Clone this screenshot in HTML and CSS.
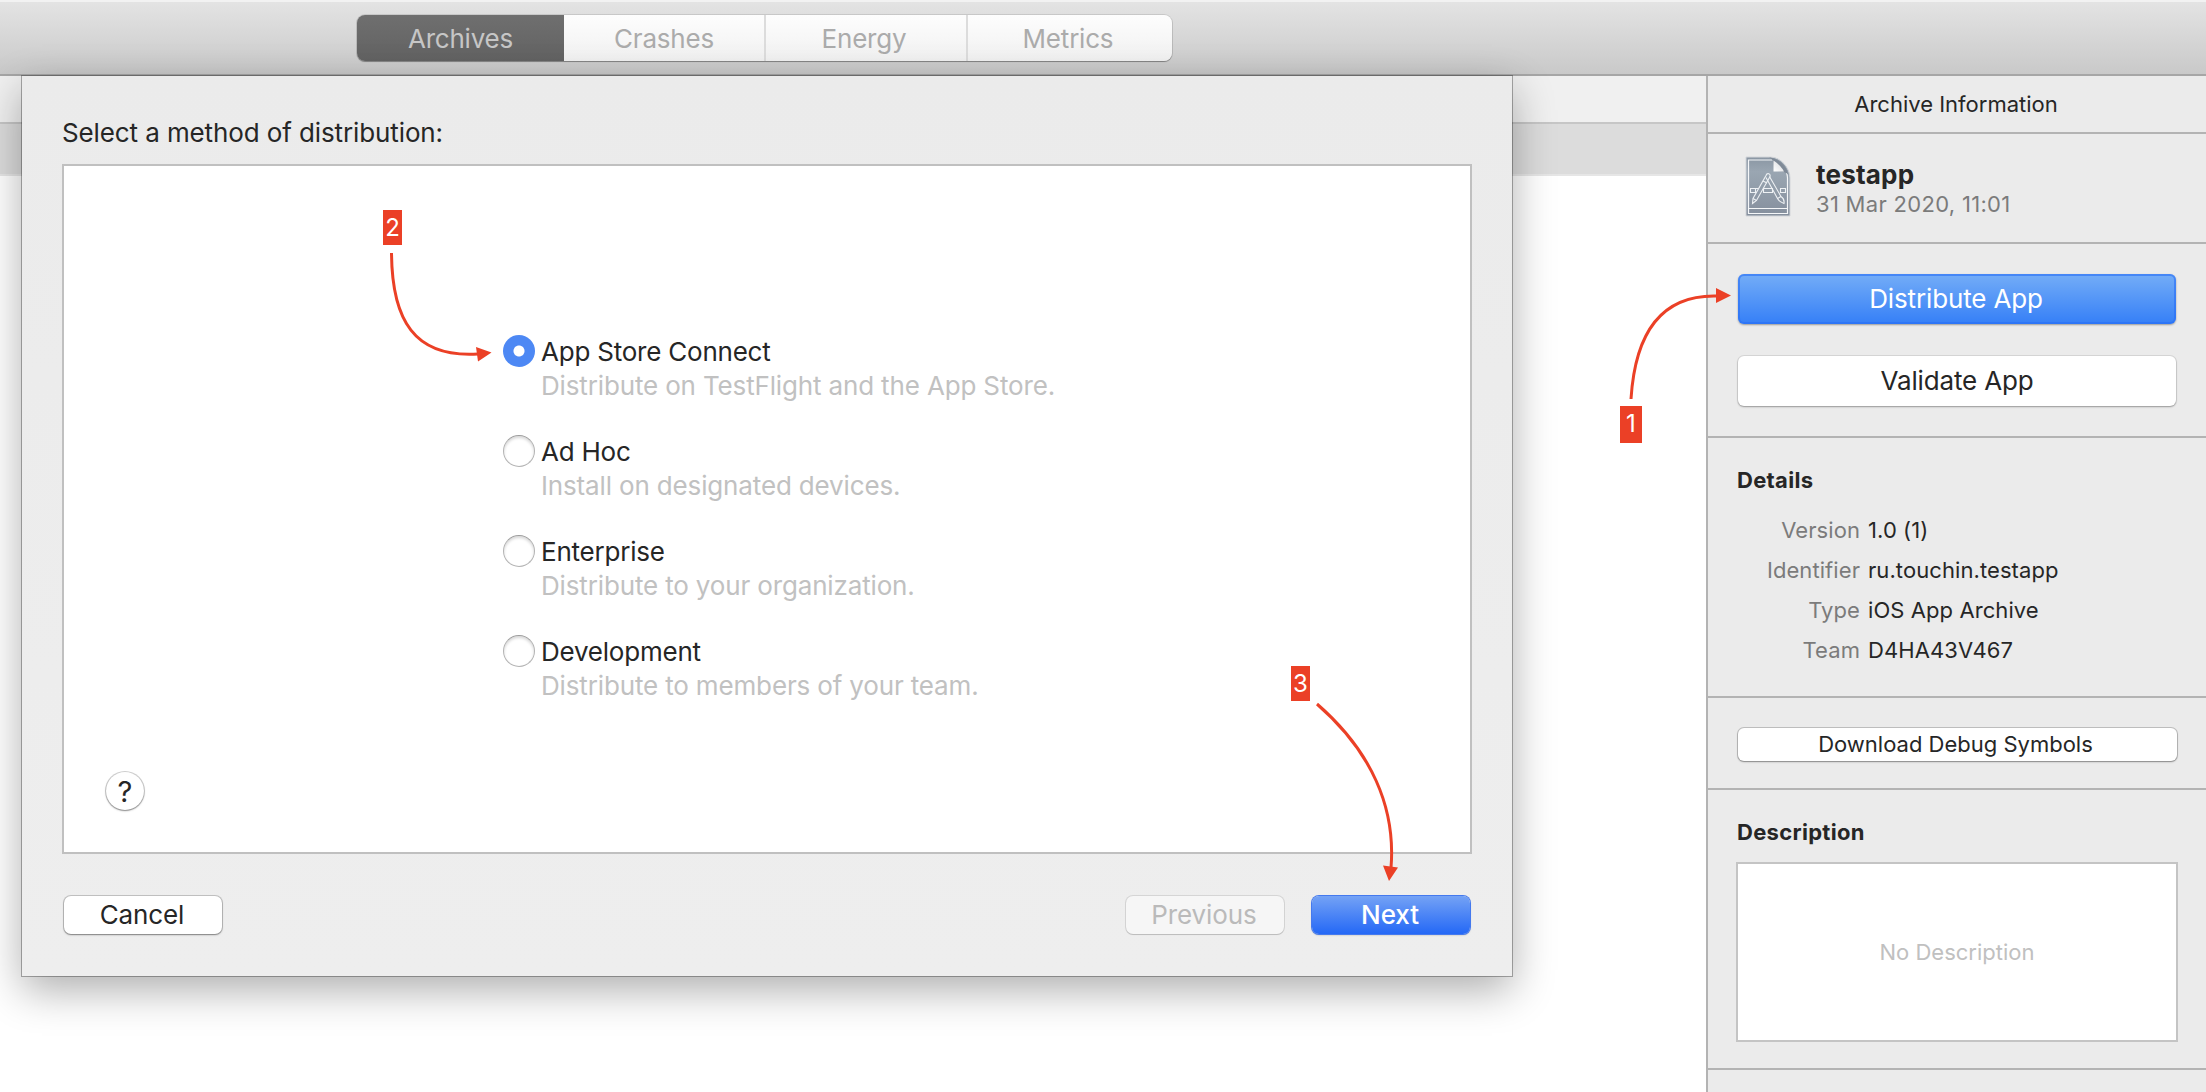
FILE: index.html
```html
<!DOCTYPE html>
<html lang="en">
<head>
<meta charset="utf-8">
<title>Archives</title>
<link rel="stylesheet" href="styles.css">
</head>
<body>
<div class="window">
  <header class="toolbar">
    <nav class="tabs">
      <button class="tab tab-active">Archives</button>
      <button class="tab">Crashes</button>
      <button class="tab">Energy</button>
      <button class="tab">Metrics</button>
    </nav>
  </header>
  <div class="content">
    <main class="archives">
      <div class="list-header"></div>
      <div class="list-row"></div>
    </main>
    <aside class="inspector">
      <h1 class="inspector-title">Archive Information</h1>
      <section class="archive">
        <svg class="archive-icon" width="48" height="62" viewBox="0 0 48 62">
          <defs>
            <linearGradient id="paper" x1="0" y1="0" x2="0" y2="1"><stop offset="0" stop-color="#8a96a3"/><stop offset=".25" stop-color="#9aa6b2"/><stop offset="1" stop-color="#858f9d"/></linearGradient>
            <linearGradient id="fold" x1="0" y1="1" x2="1" y2="0"><stop offset="0" stop-color="#fff"/><stop offset="1" stop-color="#d5d7da"/></linearGradient>
          </defs>
          <path d="M1 1h24C36 1 45 12 45 22v38H1z" fill="url(#paper)" stroke="#d3d6da" stroke-width="1"/>
          <path d="M29 4H3.500v53.500h39V22c0-2-.5-4-1-6M3.500 52.500h39" fill="none" stroke="#f4f6f8" stroke-width="1.200"/>
          <path d="M24 1.300C28 3 29 6 29 15c8 0 12 1 14.500 4C42 10 34 3 24 1.300z" fill="#7f8a97"/>
          <path d="M28.500 4.500v11H39c-2-4-6-8-10.500-11z" fill="url(#fold)"/>
          <g fill="none" stroke="#eef1f4" stroke-width="1.100">
            <path d="M5.500 32.500h5v4h-5zM18.500 32.500h9v4h-9zM35.500 32.500h5v4h-5zM10.500 32.500h3"/>
            <path d="M21 19.500c1-3 5-2 4 1L11.500 44.500 7.500 47.500 8 42.500z"/>
            <path d="M24.500 20.500 36 40.500M21 21.500 32.500 42.500M32.500 42.500l3.500-2c3 2 3.500 4 3 7-3-1-5-2-6.500-5zM18 25l4 2M8 42.500l3.500 2"/>
          </g>
        </svg>
        <div class="archive-text">
          <div class="archive-name">testapp</div>
          <div class="archive-date">31 Mar 2020, 11:01</div>
        </div>
      </section>
      <section class="actions">
        <button class="action action-primary">Distribute App</button>
        <button class="action">Validate App</button>
      </section>
      <section class="details">
        <h2 class="heading">Details</h2>
        <dl class="facts">
          <dt>Version</dt><dd>1.0 (1)</dd>
          <dt>Identifier</dt><dd>ru.touchin.testapp</dd>
          <dt>Type</dt><dd>iOS App Archive</dd>
          <dt>Team</dt><dd>D4HA43V467</dd>
        </dl>
      </section>
      <section class="symbols">
        <button class="small-button">Download Debug Symbols</button>
      </section>
      <section class="description">
        <h2 class="heading">Description</h2>
        <div class="description-box">No Description</div>
      </section>
    </aside>
  </div>

  <div class="sheet">
    <p class="prompt">Select a method of distribution:</p>
    <div class="panel">
      <div class="methods">
        <label class="method"><i class="radio radio-on"></i><b class="method-name">App Store Connect</b><small class="method-note">Distribute on TestFlight and the App Store.</small></label>
        <label class="method"><i class="radio"></i><b class="method-name">Ad Hoc</b><small class="method-note">Install on designated devices.</small></label>
        <label class="method"><i class="radio"></i><b class="method-name">Enterprise</b><small class="method-note">Distribute to your organization.</small></label>
        <label class="method"><i class="radio"></i><b class="method-name">Development</b><small class="method-note">Distribute to members of your team.</small></label>
      </div>
      <button class="help">?</button>
    </div>
    <footer class="sheet-footer">
      <button class="button">Cancel</button>
      <button class="button button-disabled">Previous</button>
      <button class="button button-default">Next</button>
    </footer>
  </div>

  <svg class="arrows" width="2206" height="1092" viewBox="0 0 2206 1092">
    <g fill="none" stroke="#eb4026" stroke-width="3">
      <path d="M1631 399C1635 335 1660 294 1718 296"/>
      <path d="M391.500 253C392 320 414 358 478 354"/>
      <path d="M1317 704C1371 751 1396 807 1391 868"/>
    </g>
    <path d="M1716 288v15l15-7.500zM476 347l2 14.500 13.500-9zM1383 865.500l15 2-9 13.500z" fill="#eb4026"/>
  </svg>
  <div class="marker marker-1">1</div>
  <div class="marker marker-2">2</div>
  <div class="marker marker-3">3</div>
</div>
</body>
</html>
```
FILE: styles.css
```css
* { box-sizing: border-box; }

body {
  margin: 0;
  font-family: Inter, "Liberation Sans", sans-serif;
  font-size: 22px;
  color: #262626;
}

button {
  margin: 0;
  padding: 0;
  border: 0;
  font: inherit;
  letter-spacing: inherit;
  color: inherit;
}

.window {
  position: relative;
  width: 2206px;
  height: 1092px;
  overflow: hidden;
  background: #fff;
}

/* Toolbar */
.toolbar {
  height: 76px;
  padding: 15px 0 0 357px;
  background: linear-gradient(#e4e4e4, #c9c9c9);
  border-bottom: 2px solid #a6a6a6;
  box-shadow: inset 0 2px #f2f2f2;
}

.tabs {
  display: grid;
  grid-template-columns: 207px 200px 202px 206px;
  width: 815px;
  height: 46px;
  border-radius: 8px;
  overflow: hidden;
  box-shadow: 0 0 0 1px rgba(0, 0, 0, .1), 0 1px 1px rgba(0, 0, 0, .3);
}

.tab {
  padding-right: 4px;
  padding-top: 1px;
  font-size: 26px;
  letter-spacing: -.2px;
  color: #ababab;
  background: linear-gradient(#fdfdfd, #f1f1f1);
  border-left: 2px solid #dcdcdc;
}

.tab-active, .tab-active + .tab {
  padding-right: 0;
  border-left: 0;
}

.tab-active {
  color: #c6c6c6;
  background: linear-gradient(#6f6f6f, #626262);
}

/* Columns */
.content {
  display: grid;
  grid-template-columns: 1706px 500px;
  height: 1016px;
}

.list-header {
  height: 48px;
  background: #f0f0f0;
  border-bottom: 2px solid #c6c6c6;
}

.list-row {
  height: 52px;
  background: #dcdcdc;
  border-bottom: 2px solid #e6e6e6;
}

/* Inspector */
.inspector {
  background: #ebebeb;
  border-left: 2px solid #b3b3b3;
}

.inspector section { border-bottom: 2px solid #b3b3b3; }

.inspector-title {
  height: 58px;
  margin: 0;
  padding-right: 2px;
  border-bottom: 2px solid #b3b3b3;
  font-size: 22px;
  font-weight: 400;
  line-height: 57px;
  text-align: center;
}

.archive {
  display: flex;
  height: 110px;
  padding: 22px 0 0 37px;
}

.archive-text { margin: 3px 0 0 23px; }

.archive-name {
  height: 31px;
  font-size: 26px;
  font-weight: 700;
  line-height: 32px;
  letter-spacing: .2px;
}

.archive-date {
  color: #7b7b7b;
  line-height: 28px;
  letter-spacing: .3px;
}

.actions {
  display: flex;
  flex-direction: column;
  gap: 32px;
  height: 194px;
  padding: 30px 30px 0;
}

.action {
  height: 50px;
  padding-bottom: 1px;
  border-radius: 6px;
  background: #fff;
  box-shadow: 0 0 0 1px rgba(0, 0, 0, .08), 0 1px 2px rgba(0, 0, 0, .3);
  font-size: 26px;
  letter-spacing: -.15px;
}

.action-primary {
  padding-right: 2px;
  color: #fff;
  background: linear-gradient(#74adf7, #357ff7);
  box-shadow: inset 0 0 0 2px rgba(40, 110, 245, .6), 0 1px 2px rgba(0, 0, 0, .35);
}

.details {
  height: 260px;
  padding: 27px 0 0 28px;
}

.heading {
  margin: 0;
  padding-left: 1px;
  font-size: 22px;
  font-weight: 700;
  line-height: 30px;
  letter-spacing: .3px;
}

.facts {
  display: grid;
  grid-template-columns: 124px 1fr;
  column-gap: 8px;
  margin: 15px 0 0;
  line-height: 40px;
  letter-spacing: .08px;
}

.facts dt {
  color: #7b7b7b;
  text-align: right;
}

.facts dd { margin: 0; }

.symbols {
  display: flex;
  height: 92px;
  padding: 30px 29px 0 30px;
}

.small-button {
  flex: 1;
  height: 33px;
  padding: 0 4px 2px 0;
  border-radius: 6px;
  background: #fff;
  box-shadow: 0 0 0 1px rgba(0, 0, 0, .18), 0 1px 2px rgba(0, 0, 0, .3);
}

.description {
  height: 280px;
  padding: 27px 28px 0;
}

.description-box {
  display: flex;
  align-items: center;
  justify-content: center;
  height: 180px;
  margin-top: 15px;
  border: 2px solid #c4c4c4;
  background: #fff;
  color: #c0c0c0;
}

/* Distribution sheet */
.sheet {
  position: absolute;
  left: 22px;
  top: 76px;
  width: 1490px;
  height: 900px;
  padding: 38px 40px 0;
  background: linear-gradient(#ebebeb, #eee);
  box-shadow: 0 0 0 1px rgba(0, 0, 0, .3), 0 14px 40px rgba(0, 0, 0, .32);
}

.prompt {
  height: 50px;
  margin: 0;
  font-size: 26px;
  line-height: 37px;
  letter-spacing: -.11px;
}

.panel {
  height: 690px;
  padding: 166px 0 0 439px;
  border: 2px solid #c0c0c0;
  background: #fff;
}

.methods { height: 440px; }

.method {
  display: grid;
  grid-template-columns: 32px 1fr;
  grid-template-rows: 37px 34px;
  column-gap: 6px;
  height: 100px;
}

.method-name, .method-note {
  grid-column: 2;
  font-size: 26px;
  font-weight: 400;
  line-height: 40px;
  letter-spacing: -.22px;
}

.method-note {
  color: #c1c1c1;
  line-height: 34px;
  letter-spacing: -.15px;
}

.radio {
  width: 32px;
  height: 32px;
  margin-top: 3px;
  border: 1.500px solid #b4b4b4;
  border-top-color: #9c9c9c;
  border-radius: 50%;
  background: #fff;
  box-shadow: inset 0 2px 3px rgba(0, 0, 0, .16);
}

.radio-on {
  border: 0;
  background: radial-gradient(circle, #fff 0 5px, #4d88f4 6px);
  box-shadow: none;
}

.help {
  display: block;
  width: 38px;
  height: 38px;
  margin-left: -397px;
  border-radius: 50%;
  background: #fff;
  box-shadow: 0 0 0 1px rgba(0, 0, 0, .18), 0 1px 2px rgba(0, 0, 0, .35);
  font-size: 29px;
}

.sheet-footer {
  display: flex;
  padding: 42px 2px 0;
}

.button {
  width: 158px;
  height: 38px;
  padding: 0 2px 1px 0;
  border-radius: 7px;
  background: #fff;
  box-shadow: 0 0 0 1px rgba(0, 0, 0, .18), 0 1px 2px rgba(0, 0, 0, .35);
  font-size: 26px;
  letter-spacing: -.1px;
}

.button-disabled {
  margin-left: auto;
  background: #f6f6f6;
  box-shadow: 0 0 0 1px rgba(0, 0, 0, .1), 0 1px 1px rgba(0, 0, 0, .12);
  color: #bababa;
}

.button-default {
  margin-left: 28px;
  background: linear-gradient(#74a2f5, #2468f6);
  box-shadow: 0 0 0 1px #4479ee, 0 1px 2px rgba(0, 0, 0, .3);
  color: #fff;
  font-weight: 500;
}

/* Numbered callouts */
.arrows {
  position: absolute;
  left: 0;
  top: 0;
}

.marker {
  position: absolute;
  width: 19px;
  height: 35px;
  background: #eb4026;
  color: #fff;
  font-size: 24px;
  line-height: 35px;
  text-align: center;
}

.marker-1 { left: 1620px; top: 406px; width: 22px; height: 37px; }
.marker-2 { left: 383px; top: 210px; }
.marker-3 { left: 1291px; top: 666px; }
```
